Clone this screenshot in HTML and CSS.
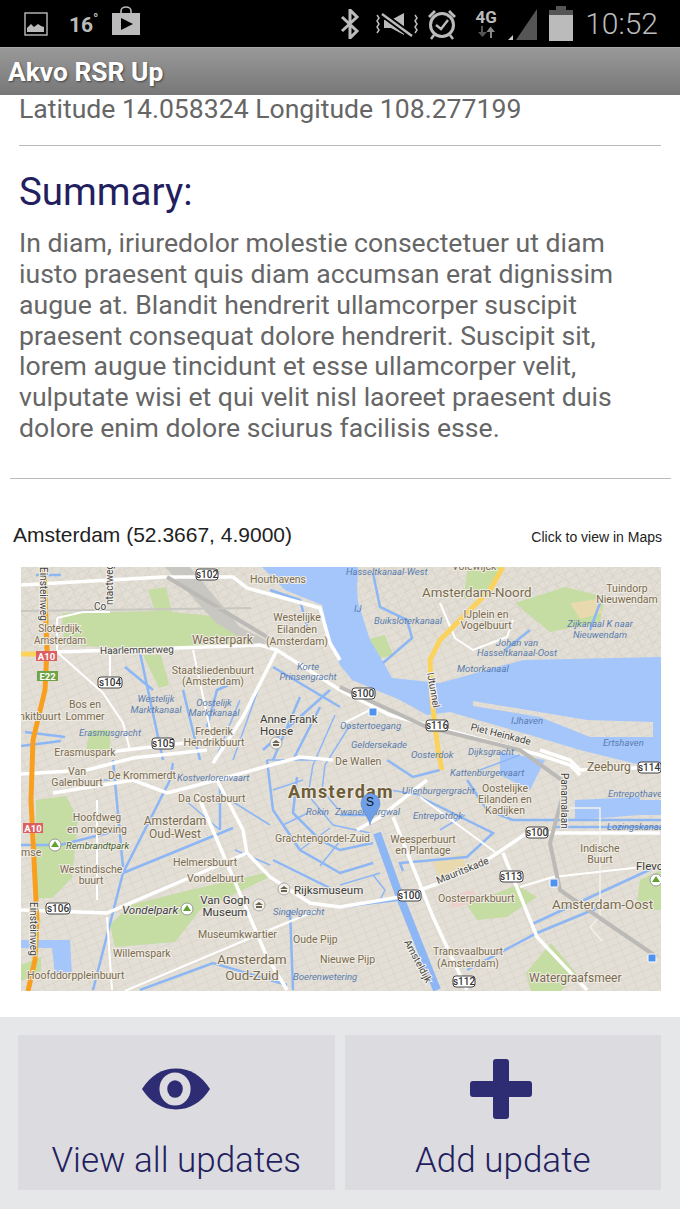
FILE: index.html
```html
<!DOCTYPE html>
<html lang="en">
<head>
  <meta charset="UTF-8">
  <title>Akvo RSR Up</title>
  <link rel="stylesheet" href="styles.css">
</head>
<body>

  <!-- Status bar -->
  <div class="statusbar">
    <div class="status-left">
      <svg class="ico-picture" width="24" height="24" viewBox="0 0 24 24"><rect x="1" y="1" width="22" height="22" fill="none" stroke="#bbb" stroke-width="1.4"/><path d="M3 20v-4l4-4 3 3 4-3 3 2 3 1v5z" fill="#bbb"/></svg>
      <span class="temp">16<sup>°</sup></span>
      <svg class="ico-store" width="30" height="30" viewBox="0 0 30 30"><path d="M10 8V5a5 4 0 0 1 10 0v3" fill="none" stroke="#bbb" stroke-width="1.6"/><rect x="1" y="7" width="28" height="22" fill="#bbb"/><path d="M10 12l12 6-12 6z" fill="#000"/></svg>
    </div>
    <div class="status-right">
      <svg class="ico-bt" width="22" height="30" viewBox="0 0 22 30"><path d="M3 8l15 14-7 7V1l7 7L3 22" fill="none" stroke="#bbb" stroke-width="3"/></svg>
      <svg class="ico-mute" width="44" height="30" viewBox="0 0 44 30"><path d="M10 11h7l13-7v22l-13-7h-7z" fill="#bbb"/><path d="M8 5l30 22" stroke="#000" stroke-width="6"/><path d="M8 5l30 22" stroke="#bbb" stroke-width="2.5"/><path d="M3 6l2 3-2 3 2 3-2 3 2 3-2 3M41 6l2 3-2 3 2 3-2 3 2 3-2 3" fill="none" stroke="#bbb" stroke-width="1.5"/></svg>
      <svg class="ico-alarm" width="32" height="32" viewBox="0 0 32 32"><circle cx="16" cy="17" r="11.5" fill="none" stroke="#bbb" stroke-width="3"/><path d="M10 17l5 4 7-9" fill="none" stroke="#bbb" stroke-width="2.4"/><path d="M2 8l6-6 2 2-6 6zM30 8l-6-6-2 2 6 6z" fill="#bbb"/><path d="M8 27l-3 4M24 27l3 4" stroke="#bbb" stroke-width="2.5"/></svg>
      <div class="net">
        <span class="net-label">4G</span>
        <svg width="18" height="12" viewBox="0 0 18 12"><path d="M5 12V6H1l4.500-5L10 6H7v6z" transform="rotate(180 5.500 6)" fill="#555"/><path d="M13 12V6H9.500l4-5.500L18 6h-3v6z" fill="#888"/></svg>
      </div>
      <svg class="ico-signal" width="32" height="32" viewBox="0 0 32 32"><path d="M30 1v31H9z" fill="#555"/><path d="M1 32l5-5v5z" fill="#ccc"/></svg>
      <svg class="ico-battery" width="24" height="35" viewBox="0 0 24 35"><path d="M7 0h10v4h7v5H0V4h7z" fill="#555"/><rect y="9" width="24" height="26" fill="#bbb"/></svg>
      <span class="clock">10:52</span>
    </div>
  </div>

  <div class="actionbar">Akvo RSR Up</div>

  <div class="content">
    <p class="latlong">Latitude 14.058324 Longitude 108.277199</p>
    <hr class="rule">
    <h2 class="summary-title">Summary:</h2>
    <p class="summary">In diam, iriuredolor molestie consectetuer ut diam iusto praesent quis diam accumsan erat dignissim augue at. Blandit hendrerit ullamcorper suscipit praesent consequat dolore hendrerit. Suscipit sit, lorem augue tincidunt et esse ullamcorper velit, vulputate wisi et qui velit nisl laoreet praesent duis dolore enim dolore sciurus facilisis esse.</p>
  </div>
  <hr class="rule-wide">

  <div class="map-head">
    <span class="map-place">Amsterdam (52.3667, 4.9000)</span>
    <span class="map-hint">Click to view in Maps</span>
  </div>

  <svg class="map" width="640" height="424" viewBox="21 567 640 424">
    <defs>
      <pattern id="streets" width="11" height="7" patternUnits="userSpaceOnUse" patternTransform="rotate(-22)">
        <path d="M0 0H11M0 0V7" stroke="#d3cfc4" stroke-width="1" fill="none"/>
      </pattern>
      <pattern id="streets2" width="8" height="10" patternUnits="userSpaceOnUse" patternTransform="rotate(35)">
        <path d="M0 0H8M0 0V10" stroke="#d3cfc4" stroke-width="1" fill="none"/>
      </pattern>
    </defs>
    <rect class="land" x="21" y="567" width="640" height="424"/>
    <rect x="21" y="567" width="640" height="424" fill="url(#streets)"/>
    <path d="M340 567H661V700L560 660 400 640z" fill="url(#streets2)"/>
    <path d="M21 567H250L230 640 21 650z" fill="url(#streets2)"/>

    <!-- parks -->
    <g class="park">
      <path d="M62 613l100-2 60 6 42 26-60 4-70 2-70-4z"/>
      <path d="M148 590l18-3 6 25-16 2z"/>
      <path d="M143 655l18 0 8 30-10 3z"/>
      <path d="M36 800l30-4 12 22-6 60-20 20-16 0z"/>
      <path d="M110 925l20-20 60-15 75-17 3 5-68 32-25 32-60 5z"/>
      <path d="M515 603l50-16 40 10-5 25-50 10z"/>
      <path d="M468 567h35l-20 28-20 4z"/>
      <path d="M365 640l20-5 8 20-20 5z"/>
      <path d="M467 905l50-20 20 12-30 20-30 3z"/>
      <path d="M526 973l25-30 25 30-15 18h-30z"/>
      <path d="M640 880l21-10v40h-25z"/>
      <path d="M90 730l20 0 0 22-25 2z"/>
      <path d="M21 965l20-8 0 14-20 10z"/>
    </g>
    <path class="pink" d="M448 896l26-6 4 12-26 6z"/>
    <path class="sand" d="M433 862l28-8 6 14-28 8z"/>
    <path class="sand" d="M570 603l28-4 4 14-22 6z"/>
    <path class="grey" d="M165 567l25 0 50 60 30 15-15 5-40-25z"/>

    <!-- open water -->
    <g class="water">
      <path d="M262 567H358L357 590 358 602 370 640 385 665 392 678 440 683 523 660 661 657V700L661 770 580 750 530 735 450 712 427 715 400 700 352 680 340 665 330 640 322 605 285 590z"/>
      <path d="M640 800H661V815H640zM575 800L640 797V815L575 820z"/>
      <path d="M21 940H70L72 975H55L52 948H21z"/>
      <path d="M500 752L545 760 530 790 500 775z"/>
    </g>
    <path class="land" d="M473 701L587 720 653 722V737L590 737 540 717 473 706z"/>
    <path d="M473 701L587 720 653 722V737L590 737 540 717 473 706z" fill="url(#streets)"/>

    <!-- canals -->
    <g class="canal" fill="none">
      <path d="M140 653l23 107M125 667l28 23M183 690l17 70M240 680l-23 10-10 37"/>
      <path d="M273 667l67 40M300 697l-27 63M320 707l-27 53M263 750l67-60"/>
      <path d="M170 780l-47 93-30 117M123 873l110-45M113 760l10 107M173 763l-3 17M220 787v43"/>
      <path d="M267 760l6 50 27 40 40 23 33-10"/>
      <path d="M297 777l-4 36 27 27 20 10 33-7"/>
      <path d="M273 860l67 33M340 815h30"/>
      <path d="M290 910l3 80M140 990l73-27 47 14 27 8"/>
      <path d="M340 907l57-7M467 970l70-37 63-26"/>
      <path d="M420 797l73 36-26 24-67 6 3 8"/>
      <path d="M387 760l26 17 27-7M467 780l20 30 26 10H661M553 827H661"/>
      <path d="M373 573l7 34 27 13 5 18-29 25M600 603l-10 27M505 650l25-20"/>
      <path d="M21 845H60l60-15M21 746l40-5M25 732l40 5"/>
      <path d="M530 925l130-60"/>
      <path d="M36 575h25M270 590l30 10 8 30"/>
    </g>
    <g class="canal-thin" fill="none">
      <path d="M335 715l-22 50-5 30 25 30 37 8M350 725l-25 40-3 25 15 18"/>
      <path d="M267 760h60M273 790l30-10M283 825l25-12M300 850l30-22M320 866l20-25"/>
      <path d="M240 700l-25 60M258 690l-25 70M230 800l40 25M235 850l35 15"/>
      <path d="M340 885l40-12M373 875l12 15-5 10M60 780h50M185 800l35 30"/>
      <path d="M390 790l30 5M440 830l25-15M480 770l40-15"/>
    </g>
    <path class="amstel" d="M377 833l23 64 37 93"/>

    <!-- motorways and roads -->
    <g class="road" fill="none">
      <path d="M21 585l142-8 70 0 14 11 73 20 10 35 10 17"/>
      <path d="M57 652l203-7 17 5 63 40 50 25 75 20 75 20 30 10 10 10"/>
      <path d="M277 650l-34 67-30 46"/>
      <path d="M21 774l66-4 46-12 74-8"/>
      <path d="M53 793l80-13 34 13 50-13 83-23 33 3"/>
      <path d="M217 780l26 50 4 23 23 24 40 26 30 4 60-10 40-14 47-23 40-27H660"/>
      <path d="M21 910l86 3 140-60"/>
      <path d="M197 793l70 164 20 33"/>
      <path d="M503 853l34 84 50 53"/>
      <path d="M393 817l40 100 34 73"/>
      <path d="M427 780l-47 37-23 13"/>
      <path d="M540 750l30 10 10 10 80-3"/>
      <path d="M100 753l110-13 33 3"/>
    </g>
    <g class="road-thin" fill="none">
      <path d="M57 618l26-6h27M57 618v34l46 41 20 30 7 27M110 652v28M193 650l20 93"/>
      <path d="M97 800v100M107 917l5 73"/>
      <path d="M520 887l33-10 107-12"/>
      <path d="M440 603l15 35 18 12 34-13 6-17"/>
      <path d="M125 991l130-55 60-25M340 725l30-15"/>
      <path d="M420 797l75 55"/>
    </g>
    <path class="road-faint" d="M570 808h30v109l-10 10 12 14"/>
    <path class="tunnel" d="M503 567l-13 23-20 20-30 30-10 20 2 40 6 50 4 20"/>
    <path class="motorway" d="M44 567l3 83-2 40-12 50-2 60 6 120-2 40-7 31"/>
    <path class="motorway-y" d="M21 654h24"/>
    <path class="rail" d="M167 577l100 60"/>
    <path class="rail" d="M340 687l87 40 93 23 46 33-16 60 10 47 47 33 50 34"/>
    <path class="rail-thin" d="M21 611l230-3"/>

    <!-- place names -->
    <g class="lbl">
      <text x="250" y="583">Houthavens</text>
      <text x="297" y="621" text-anchor="middle">Westelijke</text>
      <text x="297" y="633" text-anchor="middle">Eilanden</text>
      <text x="297" y="645" text-anchor="middle">(Amsterdam)</text>
      <text class="lg" x="192" y="644">Westerpark</text>
      <text class="sm" x="60" y="632" text-anchor="middle">Sloterdijk,</text>
      <text class="sm" x="60" y="644" text-anchor="middle">Amsterdam</text>
      <text x="213" y="674" text-anchor="middle">Staatsliedenbuurt</text>
      <text x="213" y="685" text-anchor="middle">(Amsterdam)</text>
      <text x="85" y="708" text-anchor="middle">Bos en</text>
      <text x="85" y="720" text-anchor="middle">Lommer</text>
      <text x="40" y="720" text-anchor="middle">nkitbuurt</text>
      <text x="214" y="735" text-anchor="middle">Frederik</text>
      <text x="214" y="746" text-anchor="middle">Hendrikbuurt</text>
      <text x="85" y="756" text-anchor="middle">Erasmuspark</text>
      <text x="77" y="775" text-anchor="middle">Van</text>
      <text x="77" y="786" text-anchor="middle">Galenbuurt</text>
      <text x="108" y="779">De Krommerdt</text>
      <text x="178" y="802">Da Costabuurt</text>
      <text x="97" y="821" text-anchor="middle">Hoofdweg</text>
      <text x="97" y="833" text-anchor="middle">en omgeving</text>
      <text class="lg" x="175" y="825" text-anchor="middle">Amsterdam</text>
      <text class="lg" x="175" y="838" text-anchor="middle">Oud-West</text>
      <text x="91" y="873" text-anchor="middle">Westindische</text>
      <text x="91" y="884" text-anchor="middle">buurt</text>
      <text x="173" y="866">Helmersbuurt</text>
      <text x="187" y="882">Vondelbuurt</text>
      <text x="198" y="938">Museumkwartier</text>
      <text x="293" y="943">Oude Pijp</text>
      <text x="113" y="957">Willemspark</text>
      <text class="xl" x="252" y="964" text-anchor="middle">Amsterdam</text>
      <text class="xl" x="252" y="980" text-anchor="middle">Oud-Zuid</text>
      <text x="27" y="979">Hoofddorppleinbuurt</text>
      <text x="21" y="856">mse</text>
      <text class="city" x="288" y="798">Amsterdam</text>
      <text x="275" y="842">Grachtengordel-Zuid</text>
      <text x="320" y="963">Nieuwe Pijp</text>
      <text x="335" y="765">De Wallen</text>
      <text x="505" y="792" text-anchor="middle">Oostelijke</text>
      <text x="505" y="803" text-anchor="middle">Eilanden en</text>
      <text x="505" y="814" text-anchor="middle">Kadijken</text>
      <text x="423" y="843" text-anchor="middle">Weesperbuurt</text>
      <text x="423" y="854" text-anchor="middle">en Plantage</text>
      <text class="lg" x="587" y="771">Zeeburg</text>
      <text x="600" y="852" text-anchor="middle">Indische</text>
      <text x="600" y="863" text-anchor="middle">Buurt</text>
      <text x="438" y="902">Oosterparkbuurt</text>
      <text class="xl" x="552" y="909">Amsterdam-Oost</text>
      <text x="468" y="955" text-anchor="middle">Transvaalbuurt</text>
      <text x="468" y="967" text-anchor="middle">(Amsterdam)</text>
      <text class="lg" x="529" y="982">Watergraafsmeer</text>
      <text class="xl" x="422" y="597">Amsterdam-Noord</text>
      <text x="486" y="618" text-anchor="middle">IJplein en</text>
      <text x="486" y="629" text-anchor="middle">Vogelbuurt</text>
      <text x="627" y="592" text-anchor="middle">Tuindorp</text>
      <text x="627" y="603" text-anchor="middle">Nieuwendam</text>
      <text x="452" y="570">Volewijck</text>
    </g>

    <!-- water names -->
    <g class="wlbl">
      <text x="308" y="670" text-anchor="middle">Korte</text>
      <text x="308" y="680" text-anchor="middle">Prinsengracht</text>
      <text x="156" y="702" text-anchor="middle">Westelijk</text>
      <text x="156" y="713" text-anchor="middle">Marktkanaal</text>
      <text x="214" y="706" text-anchor="middle">Oostelijk</text>
      <text x="214" y="716" text-anchor="middle">Marktkanaal</text>
      <text x="79" y="736">Erasmusgracht</text>
      <text x="177" y="781">Kostverlorenvaart</text>
      <text x="273" y="915">Singelgracht</text>
      <text x="306" y="815">Rokin</text>
      <text x="335" y="815">Zwanenburgwal</text>
      <text x="293" y="980">Boerenwetering</text>
      <text x="402" y="794">Uilenburgergracht</text>
      <text x="450" y="776">Kattenburgervaart</text>
      <text x="413" y="819">Entrepotdok</text>
      <text x="608" y="797">Entrepothaven</text>
      <text x="607" y="830">Lozingskanaal</text>
      <text x="346" y="575">Hasseltkanaal-West</text>
      <text x="354" y="612">IJ</text>
      <text x="374" y="624">Buiksloterkanaal</text>
      <text x="600" y="627" text-anchor="middle">Zijkanaal K naar</text>
      <text x="600" y="638" text-anchor="middle">Nieuwendam</text>
      <text x="517" y="646" text-anchor="middle">Johan van</text>
      <text x="517" y="656" text-anchor="middle">Hasseltkanaal-Oost</text>
      <text x="457" y="672">Motorkanaal</text>
      <text x="511" y="724">IJhaven</text>
      <text x="603" y="746">Ertshaven</text>
      <text x="340" y="729">Oostertoegang</text>
      <text x="351" y="748">Geldersekade</text>
      <text x="468" y="755">Dijksgracht</text>
      <text x="411" y="758">Oosterdok</text>
    </g>

    <!-- road names -->
    <g class="rlbl">
      <text x="100" y="654" transform="rotate(-1 100 654)">Haarlemmerweg</text>
      <text x="94" y="610">Co</text>
      <text x="113" y="605" transform="rotate(-90 113 605)">ntactweg</text>
      <text x="40" y="567" transform="rotate(90 40 567)">Einsteinweg</text>
      <text x="30" y="902" transform="rotate(90 30 902)">Einsteinweg</text>
      <text x="561" y="773" transform="rotate(90 561 773)">Panamalaan</text>
      <text x="438" y="884" transform="rotate(-22 438 884)">Mauritskade</text>
      <text x="404" y="942" transform="rotate(62 404 942)">Amsteldijk</text>
      <text x="427" y="673" transform="rotate(80 427 673)">IJtunnel</text>
      <text x="470" y="730" transform="rotate(14 470 730)">Piet Heinkade</text>
    </g>

    <!-- labels in darker ink -->
    <g class="dark">
      <text x="260" y="723">Anne Frank</text>
      <text x="260" y="735">House</text>
      <text x="294" y="894">Rijksmuseum</text>
      <text x="225" y="904" text-anchor="middle">Van Gogh</text>
      <text x="225" y="916" text-anchor="middle">Museum</text>
      <text class="vondel" x="122" y="914">Vondelpark</text>
      <text class="remb" x="66" y="849">Rembrandtpark</text>
      <text x="636" y="870">Flevop</text>
    </g>

    <!-- shields -->
    <g class="shield">
      <rect x="196" y="569" width="22" height="11" rx="3"/><text x="207" y="578">s102</text>
      <rect x="98" y="677" width="24" height="11" rx="3"/><text x="110" y="686">s104</text>
      <rect x="152" y="738" width="22" height="11" rx="3"/><text x="163" y="747">s105</text>
      <rect x="46" y="903" width="24" height="11" rx="3"/><text x="58" y="912">s106</text>
      <rect x="352" y="688" width="23" height="11" rx="3"/><text x="363" y="697">s100</text>
      <rect x="426" y="720" width="22" height="11" rx="3"/><text x="437" y="729">s116</text>
      <rect x="526" y="827" width="22" height="11" rx="3"/><text x="537" y="836">s100</text>
      <rect x="398" y="890" width="23" height="11" rx="3"/><text x="409" y="899">s100</text>
      <rect x="500" y="871" width="23" height="11" rx="3"/><text x="511" y="880">s113</text>
      <rect x="453" y="976" width="22" height="11" rx="3"/><text x="464" y="985">s112</text>
      <rect x="638" y="762" width="23" height="11" rx="3"/><text x="649" y="771">s114</text>
    </g>
    <g class="badge">
      <rect class="a10" x="36" y="651" width="21" height="10"/><text x="46.500" y="660">A10</text>
      <rect class="e22" x="37" y="671" width="21" height="10"/><text x="47.500" y="680">E22</text>
      <rect class="a10" x="23" y="823" width="20" height="10"/><text x="33" y="832">A10</text>
    </g>

    <!-- point icons -->
    <g class="tree">
      <circle cx="55" cy="845" r="6"/><path d="M55 841l4 6h-8z"/>
      <circle cx="187" cy="909" r="6"/><path d="M187 905l4 6h-8z"/>
      <circle cx="656" cy="880" r="6"/><path d="M656 876l4 6h-8z"/>
    </g>
    <g class="museum">
      <circle cx="276" cy="743" r="6"/><path d="M272 743l4-3 4 3zM273 744h6v2h-6z"/>
      <circle cx="284" cy="889" r="6"/><path d="M280 889l4-3 4 3zM281 890h6v2h-6z"/>
      <circle cx="259" cy="905" r="6"/><path d="M255 905l4-3 4 3zM256 906h6v2h-6z"/>
    </g>
    <g class="ferry">
      <rect x="369" y="708" width="8" height="8" rx="1"/>
      <rect x="550" y="879" width="8" height="8" rx="1"/>
      <rect x="648" y="954" width="8" height="8" rx="1"/>
    </g>

    <!-- marker -->
    <path class="pin" d="M370 825c-1-8-9-14-9-22a9.500 9.500 0 0 1 19 0c0 8-9 14-10 22z"/>
    <text class="pin-letter" x="370" y="806">S</text>
  </svg>

  <div class="footer">
    <div class="btn">
      <svg class="btn-ico" width="70" height="60" viewBox="0 0 72 44"><path d="M1 22C10 8 22 1 36 1s26 7 35 21C62 36 50 43 36 43S10 36 1 22z" fill="#2e2c73"/><ellipse cx="35" cy="22" rx="16" ry="17" fill="#dcdbe0"/><ellipse cx="35" cy="22" rx="8" ry="9" fill="#2e2c73"/></svg>
      <span class="btn-label">View all updates</span>
    </div>
    <div class="btn">
      <svg class="btn-ico ico-add" width="62" height="60" viewBox="0 0 62 60"><path d="M23 3a3 3 0 0 1 3-3h10a3 3 0 0 1 3 3v19h20a3 3 0 0 1 3 3v10a3 3 0 0 1-3 3H39v19a3 3 0 0 1-3 3H26a3 3 0 0 1-3-3V38H3a3 3 0 0 1-3-3V25a3 3 0 0 1 3-3h20z" fill="#2e2c73"/></svg>
      <span class="btn-label">Add update</span>
    </div>
  </div>

</body>
</html>
```

FILE: styles.css
```css
body {
  margin: 0;
  width: 680px;
  height: 1209px;
  overflow: hidden;
  background: white;
  font-family: Roboto, sans-serif;
}

.statusbar {
  height: 47px;
  background: #000;
  display: flex;
  justify-content: space-between;
  align-items: center;
  color: #bbb;
}

.status-left {
  display: flex;
  align-items: center;
  margin-left: 24px;
}

.temp {
  margin-left: 21px;
  font-size: 21px;
  font-weight: 700;
  width: 42px;
}

.temp sup {
  font-size: 14px;
}

.ico-store {
  margin-top: -6px;
}

.status-right {
  display: flex;
  align-items: center;
  margin-right: 22px;
}

.ico-mute { margin-left: 13px; }
.ico-alarm { margin-left: 8px; }
.ico-signal { margin-left: 8px; }
.ico-battery { margin-left: 10px; }

.net {
  display: flex;
  flex-direction: column;
  align-items: center;
  width: 26px;
  margin-left: 15px;
}

.net-label {
  font-size: 17px;
  font-weight: 700;
  line-height: 17px;
}

.clock {
  font-size: 30px;
  font-weight: 300;
  margin-left: 12px;
}

.actionbar {
  height: 48px;
  box-sizing: border-box;
  padding-left: 8px;
  line-height: 48px;
  background: linear-gradient(#999, #777);
  border-top: 1px solid #aaa;
  color: white;
  font-size: 26.400px;
  font-weight: 700;
  text-shadow: 1px 1px 2px #444;
}

.content {
  padding: 0 19px;
}

.latlong {
  margin: 0;
  height: 50px;
  font-size: 26.600px;
  line-height: 28px;
  color: #666;
}

.rule {
  margin: 0;
  border: 0;
  border-top: 1px solid #bbb;
}

.summary-title {
  margin: 24px 0 0;
  font-size: 38.500px;
  font-weight: 400;
  line-height: 44px;
  color: #231f5e;
}

.summary {
  margin: 14px 0 0;
  font-size: 26.600px;
  line-height: 30.850px;
  color: #666;
}

.rule-wide {
  margin: 34px 9px 0 10px;
  border: 0;
  border-top: 1px solid #bbb;
}

.map-head {
  display: flex;
  justify-content: space-between;
  align-items: baseline;
  margin-top: 44px;
  padding: 0 18px 0 13px;
  font-family: "Liberation Sans", sans-serif;
  color: #222;
  height: 44px;
}

.map-place {
  font-size: 21px;
}

.map-hint {
  font-size: 14px;
}

.map {
  display: block;
  margin-left: 21px;
  font-family: Roboto, sans-serif;
}

.land { fill: #e3dfd6; }
.park path { fill: #c5dca3; }
.pink { fill: #eccfcb; }
.sand { fill: #e8d9ae; }
.grey { fill: #c9c7c2; }
.water path { fill: #a4c6fb; }
.canal { stroke: #8db6f5; stroke-width: 2.500; }
.canal-thin { stroke: #8db6f5; stroke-width: 1.500; }
.amstel { fill: none; stroke: #8db6f5; stroke-width: 8; }
.road { stroke: white; stroke-width: 3.500; }
.road-thin { stroke: white; stroke-width: 2; }
.road-faint { fill: none; stroke: #f3f1ea; stroke-width: 1.500; }
.tunnel { fill: none; stroke: #fbd35c; stroke-width: 5; }
.motorway { fill: none; stroke: #f99f1f; stroke-width: 5; }
.motorway-y { fill: none; stroke: #fbd35c; stroke-width: 5; }
.rail { fill: none; stroke: #bcbab6; stroke-width: 4; }
.rail-thin { fill: none; stroke: #c9c7c2; stroke-width: 2; }

.lbl text { font-size: 10.500px; fill: #7a6a4f; stroke: #efece4; stroke-width: 2px; paint-order: stroke; }
.lbl .sm { font-size: 10px; }
.lbl .lg { font-size: 12px; }
.lbl .xl { font-size: 13.300px; }
.lbl .city { font-size: 18px; font-weight: 700; letter-spacing: 1.300px; fill: #6e5c38; }

.wlbl text { font-size: 9.500px; font-style: italic; fill: #5a7cae; }

.rlbl text { font-size: 10px; fill: #444; stroke: #f4f2ec; stroke-width: 2px; paint-order: stroke; }

.dark text { font-size: 11.500px; fill: #3c3c3c; stroke: #efece4; stroke-width: 2px; paint-order: stroke; }
.dark .vondel { font-size: 11.500px; font-style: italic; }
.dark .remb { font-size: 9.500px; font-style: italic; fill: #3f5b2b; }

.shield rect { fill: white; stroke: #444; stroke-width: 1; }
.shield text { font-size: 10px; text-anchor: middle; fill: #333; font-weight: 500; }

.badge text { font-size: 9.500px; font-weight: 700; text-anchor: middle; fill: white; }
.a10 { fill: #dc5f63; }
.e22 { fill: #6fa345; }

.tree circle { fill: white; stroke: #999; }
.tree path { fill: #5fa32e; }
.museum circle { fill: #f2f0ea; stroke: #aaa; }
.museum path { fill: #6b6350; }
.ferry rect { fill: #4f93ee; stroke: white; stroke-width: 1; }

.pin { fill: #6f9fe8; stroke: #4f7cc0; stroke-width: 0.500; }
.pin-letter { font-family: "Liberation Sans", sans-serif; font-size: 12px; text-anchor: middle; fill: #111; }

.footer {
  margin-top: 26px;
  height: 192px;
  box-sizing: border-box;
  padding: 18px 19px 19px 18px;
  background: #e6e7e9;
  display: flex;
  gap: 10px;
}

.btn {
  flex: 1;
  background: #dcdbe0;
  display: flex;
  flex-direction: column;
  align-items: center;
}

.btn-ico {
  height: 60px;
  margin-top: 24px;
}

.ico-add {
  margin-right: 3px;
}

.btn-label {
  margin-top: 21px;
  font-size: 35px;
  font-weight: 300;
  color: #231f5e;
}
```
